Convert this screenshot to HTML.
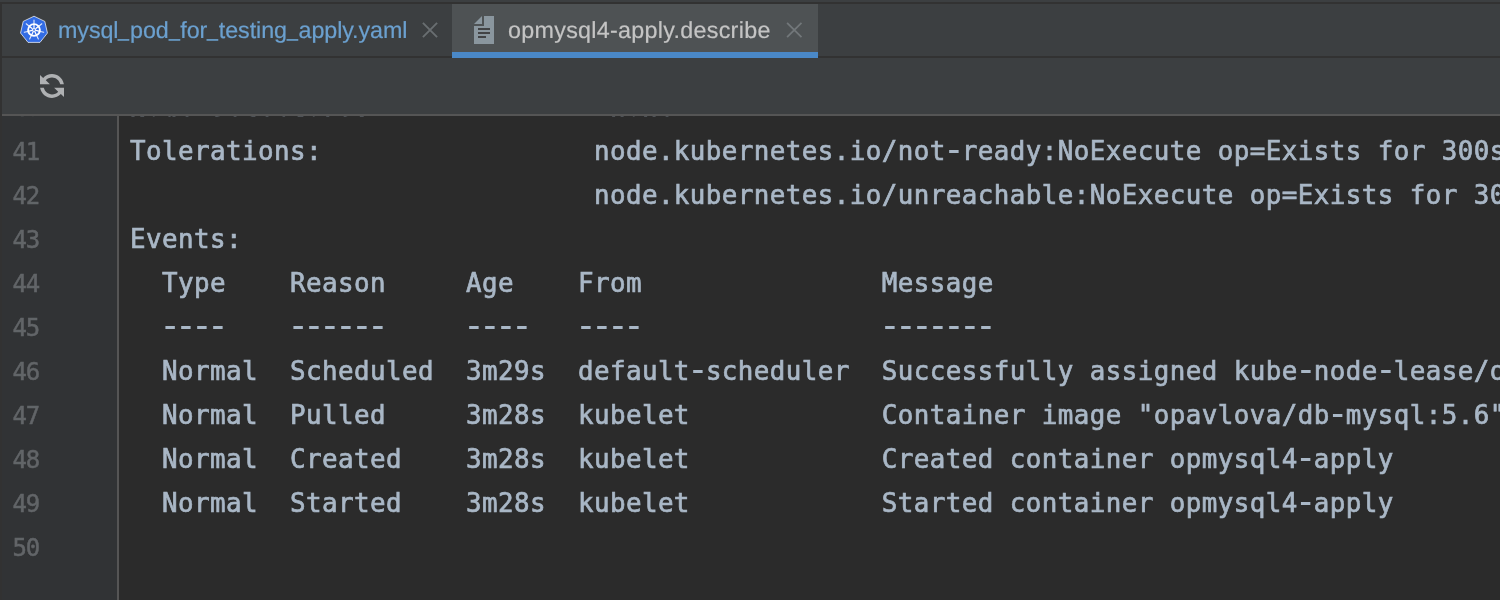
<!DOCTYPE html>
<html>
<head>
<meta charset="utf-8">
<title>opmysql4-apply.describe</title>
<style>
html,body{margin:0;padding:0;}
body{width:1500px;height:600px;overflow:hidden;background:#3c3f41;position:relative;font-family:"Liberation Sans",sans-serif;}
.abs{position:absolute;}
#topline{left:0;top:2px;width:1500px;height:2px;background:#323232;}
#leftline{left:0;top:2px;width:2px;height:598px;background:#323232;}
#tabs{left:2px;top:4px;width:1498px;height:52px;background:#3c3f41;}
#tabline{left:2px;top:56px;width:1498px;height:2px;background:#323232;}
#tab2{left:452px;top:4px;width:366px;height:48px;background:#4e5254;}
#tab2u{left:452px;top:52px;width:366px;height:6px;background:#4a88c7;}
.tabtxt{position:absolute;top:14px;height:32px;line-height:32px;font-size:23.3px;white-space:pre;will-change:transform;text-rendering:geometricPrecision;}
.u{display:inline-block;width:11.6px;transform:scaleX(0.84);transform-origin:0 50%;position:relative;top:-2.3px;}
#t1{left:58px;color:#6ba0cf;letter-spacing:-0.08px;-webkit-text-stroke:0.2px #6ba0cf;}
#t2{left:508px;color:#c4c4c4;letter-spacing:0.29px;-webkit-text-stroke:0.2px #c4c4c4;}
#toolbar{left:2px;top:58px;width:1498px;height:56px;background:#3c3f41;}
#toolline{left:2px;top:114px;width:1498px;height:2px;background:#555555;}
#editor{left:2px;top:116px;width:1498px;height:484px;background:#2b2b2b;overflow:hidden;will-change:transform;}
#gutter{left:0;top:0;width:115px;height:484px;background:#313335;}
#gline{left:115px;top:0;width:2px;height:484px;background:#555555;}
.ln{position:absolute;left:10.5px;height:44px;line-height:44px;font-family:"DejaVu Sans Mono","Liberation Mono",monospace;font-size:24px;color:#626568;white-space:pre;-webkit-text-stroke:0.5px #626568;margin-top:1px;letter-spacing:-1.2px;}
.cl{position:absolute;left:128px;height:44px;line-height:44px;font-family:"DejaVu Sans Mono","Liberation Mono",monospace;font-size:25.85px;letter-spacing:0.437px;color:#a9b7c6;white-space:pre;-webkit-text-stroke:0.7px #a9b7c6;}
.h{font-size:37px;line-height:0;letter-spacing:-6.276px;position:relative;top:1.6px;left:-3.14px;-webkit-text-stroke:0;}
</style>
</head>
<body>
<div class="abs" id="topline"></div>
<div class="abs" id="tabs"></div>
<div class="abs" id="tabline"></div>
<div class="abs" id="tab2"></div>
<div class="abs" id="tab2u"></div>
<svg class="abs" id="k8s" style="left:18px;top:14px" width="32" height="32" viewBox="0 0 32 32"><polygon points="16,2.2 26.8,7.4 29.45,19.05 22,28.4 10,28.4 2.55,19.05 5.2,7.4" fill="#326ce5" stroke="#ffffff" stroke-width="0.7" stroke-linejoin="round"/><circle cx="16" cy="16" r="5.9" fill="none" stroke="#ffffff" stroke-width="1.9"/><path d="M16.00,14.00L16.00,10.00M17.56,14.75L20.69,12.26M17.95,16.45L21.85,17.34M16.87,17.80L18.60,21.41M15.13,17.80L13.40,21.41M14.05,16.45L10.15,17.34M14.44,14.75L11.31,12.26" stroke="#ffffff" stroke-width="1.2" fill="none"/><path d="M16.00,9.50L16.00,6.00M21.08,11.95L23.82,9.77M22.34,17.45L25.75,18.23M18.82,21.86L20.34,25.01M13.18,21.86L11.66,25.01M9.66,17.45L6.25,18.23M10.92,11.95L8.18,9.77" stroke="#ffffff" stroke-opacity="0.85" stroke-width="1.1" stroke-linecap="round" fill="none"/><circle cx="16" cy="16" r="2.1" fill="#ffffff"/><circle cx="16" cy="16" r="0.9" fill="#326ce5"/></svg>
<div class="tabtxt" id="t1">mysql<span class="u">_</span>pod<span class="u">_</span>for<span class="u">_</span>testing<span class="u">_</span>apply.yaml</div>
<svg class="abs" style="left:420px;top:20px" width="20" height="20" viewBox="0 0 20 20"><path d="M2.9,2.9L17.1,17.1M17.1,2.9L2.9,17.1" stroke="#696e71" stroke-width="1.9" fill="none"/></svg>
<svg class="abs" style="left:468px;top:14px" width="32" height="32" viewBox="0 0 32 32"><g fill="#9aa7b0" fill-opacity="0.8"><polygon points="14,2 14,10 6,10"/><polygon points="16,2 26,2 26,30 6,30 6,12 16,12"/></g><g fill="#231f20" fill-opacity="0.7"><rect x="10" y="14" width="12" height="2"/><rect x="10" y="18" width="12" height="2"/><rect x="10" y="22" width="8" height="2"/></g></svg>
<div class="tabtxt" id="t2">opmysql4-apply.describe</div>
<svg class="abs" style="left:784px;top:20px" width="20" height="20" viewBox="0 0 20 20"><path d="M3.1,2.9L17.5,17.1M17.5,2.9L3.1,17.1" stroke="#72777a" stroke-width="1.8" fill="none"/></svg>
<div class="abs" id="toolbar"></div>
<div class="abs" id="toolline"></div>
<svg class="abs" style="left:36px;top:70px" width="32" height="32" viewBox="0 0 16 16"><path fill="#AFB1B3" d="M3.58,3.94C4.65,2.75 6.24,2 8,2C10.92,2 13.35,4.09 13.89,6.85L13.93,7.1L12.1,7.1C11.6,5.2 9.95,3.8 8,3.8C6.75,3.8 5.66,4.32 4.9,5.17L6.95,7.1L2,7.1L2,2.45Z M12.42,12.06C11.35,13.25 9.76,14 8,14C5.08,14 2.65,11.91 2.11,9.15L2.07,8.9L3.9,8.9C4.4,10.8 6.05,12.2 8,12.2C9.25,12.2 10.34,11.68 11.1,10.83L9.05,8.9L14,8.9L14,13.55Z"/></svg>
<div class="abs" id="editor">
<div class="abs" id="gutter"></div>
<div class="abs" id="gline"></div>
<div class="ln" style="top:-31.5px">40</div>
<div class="ln" style="top:13px">41</div>
<div class="ln" style="top:57px">42</div>
<div class="ln" style="top:101px">43</div>
<div class="ln" style="top:145px">44</div>
<div class="ln" style="top:189px">45</div>
<div class="ln" style="top:233px">46</div>
<div class="ln" style="top:277px">47</div>
<div class="ln" style="top:321px">48</div>
<div class="ln" style="top:365px">49</div>
<div class="ln" style="top:409px">50</div>
<div class="cl" style="top:-31.5px">Node<span class="h">-</span>Selectors:              &lt;none&gt;</div>
<div class="cl" style="top:13px">Tolerations:                 node.kubernetes.io/not<span class="h">-</span>ready:NoExecute op=Exists for 300s</div>
<div class="cl" style="top:57px">                             node.kubernetes.io/unreachable:NoExecute op=Exists for 300s</div>
<div class="cl" style="top:101px">Events:</div>
<div class="cl" style="top:145px">  Type    Reason     Age    From               Message</div>
<div class="cl" style="top:189px">  <span class="h">----</span>    <span class="h">------</span>     <span class="h">----</span>   <span class="h">----</span>               <span class="h">-------</span></div>
<div class="cl" style="top:233px">  Normal  Scheduled  3m29s  default<span class="h">-</span>scheduler  Successfully assigned kube<span class="h">-</span>node<span class="h">-</span>lease/opmysql4<span class="h">-</span>apply to docker<span class="h">-</span>desktop</div>
<div class="cl" style="top:277px">  Normal  Pulled     3m28s  kubelet            Container image "opavlova/db<span class="h">-</span>mysql:5.6" already present on machine</div>
<div class="cl" style="top:321px">  Normal  Created    3m28s  kubelet            Created container opmysql4<span class="h">-</span>apply</div>
<div class="cl" style="top:365px">  Normal  Started    3m28s  kubelet            Started container opmysql4<span class="h">-</span>apply</div>
</div>
<div class="abs" id="leftline"></div>
</body>
</html>
